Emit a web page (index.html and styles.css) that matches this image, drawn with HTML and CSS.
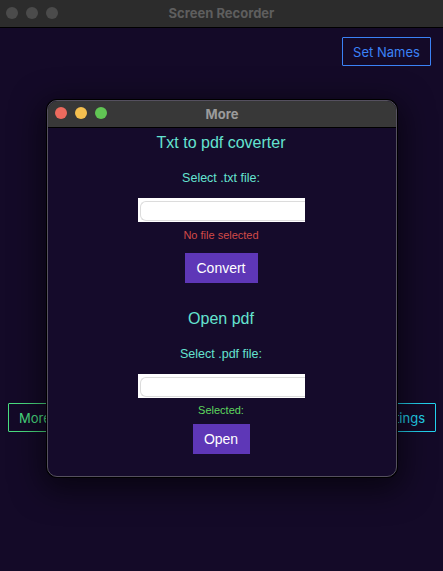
FILE: index.html
```html
<!DOCTYPE html>
<html>
<head>
<meta charset="utf-8">
<link rel="stylesheet" href="styles.css">
</head>
<body>
<div class="window">
  <div class="titlebar">
    <div class="lights">
      <span class="light grey"></span>
      <span class="light grey"></span>
      <span class="light grey"></span>
    </div>
    <div class="title">Screen Recorder</div>
  </div>
  <div class="content">
    <div class="top-row">
      <button class="btn btn-blue">Set Names</button>
    </div>
    <div class="bottom-row">
      <button class="btn btn-green">More</button>
      <button class="btn btn-cyan">Settings</button>
    </div>
  </div>

  <div class="modal">
    <div class="modal-titlebar">
      <div class="lights">
        <span class="light red"></span>
        <span class="light yellow"></span>
        <span class="light green"></span>
      </div>
      <div class="modal-title">More</div>
    </div>
    <div class="modal-body">
      <h2 class="heading">Txt to pdf coverter</h2>
      <div class="label">Select .txt file:</div>
      <div class="file-box"><div class="file-inner"></div></div>
      <div class="status status-error">No file selected</div>
      <button class="action">Convert</button>

      <h2 class="heading heading-second">Open pdf</h2>
      <div class="label">Select .pdf file:</div>
      <div class="file-box"><div class="file-inner"></div></div>
      <div class="status status-ok">Selected:</div>
      <button class="action action-open">Open</button>
    </div>
  </div>
</div>
</body>
</html>
```
FILE: styles.css
```css
* { box-sizing: border-box; }
html, body {
  margin: 0;
  padding: 0;
  width: 443px;
  height: 571px;
  overflow: hidden;
  background: #140a28;
}
.window {
  position: relative;
  width: 443px;
  height: 571px;
  background: #140a28;
  font-family: "Liberation Sans", Arial, sans-serif;
}
.titlebar {
  height: 28px;
  background: #2c2c2c;
  border-bottom: 1px solid #000;
  position: relative;
  display: flex;
  align-items: center;
  justify-content: center;
}
.lights {
  position: absolute;
  left: 6px;
  top: 7px;
  display: flex;
  gap: 8px;
}
.light {
  width: 12px;
  height: 12px;
  border-radius: 50%;
  display: block;
}
.grey { background: #4b4b4b; }
.red { background: #ec6a5e; }
.yellow { background: #f4bf4f; }
.green { background: #61c554; }
.title {
  font-family: Inter, "Liberation Sans", sans-serif;
  font-weight: 700;
  font-size: 13px;
  color: #5e5e5e;
  margin-top: -1px;
}
.content {
  display: flex;
  flex-direction: column;
}
.top-row {
  display: flex;
  justify-content: flex-end;
  padding: 9px 12px 0 0;
}
.bottom-row {
  display: flex;
  justify-content: space-between;
  padding: 0 7px 0 8px;
  margin-top: 337px;
}
.btn {
  font-family: Inter, "Liberation Sans", sans-serif;
  font-size: 13px;
  background: transparent;
  height: 29px;
  padding: 0 10px;
  border-radius: 1px;
  white-space: nowrap;
  cursor: pointer;
}
.btn-blue {
  width: 89px;
  padding: 0;
  text-align: center;
  color: #3b82f6;
  border: 1px solid #3b82f6;
}
.btn-green {
  color: #4ade80;
  border: 1px solid #4ade80;
  width: 60px;
  text-align: left;
}
.btn-cyan {
  color: #22d3ee;
  border: 1px solid #22d3ee;
  width: 78px;
  text-align: right;
}
.modal {
  position: absolute;
  left: 47px;
  top: 100px;
  width: 350px;
  height: 377px;
  background: #150b2b;
  border: 1px solid #55505f;
  border-radius: 10px;
  overflow: hidden;
  box-shadow: 0 0 0 1px #000, 0 8px 30px 6px rgba(0, 0, 0, 0.55);
}
.modal-titlebar {
  height: 27px;
  background: #383838;
  border-bottom: 1px solid #000;
  position: relative;
  display: flex;
  align-items: center;
  justify-content: center;
}
.modal-titlebar .lights {
  left: 7px;
  top: 6px;
}
.modal-title {
  font-family: Inter, "Liberation Sans", sans-serif;
  font-weight: 700;
  font-size: 13px;
  color: #9b9b9b;
}
.modal-body {
  display: flex;
  flex-direction: column;
  align-items: center;
  padding-top: 5px;
  padding-right: 2px;
}
.heading {
  margin: 0;
  font-size: 16px;
  line-height: 20px;
  font-weight: 400;
  color: #64e3d0;
}
.heading-second { margin-top: 26px; }
.label {
  margin-top: 17px;
  font-size: 12.5px;
  line-height: 16px;
  color: #64e3d0;
}
.file-box {
  margin-top: 12px;
  width: 167px;
  height: 24px;
  background: #fff;
  padding: 3px 0 1px 2px;
}
.file-inner {
  width: 100%;
  height: 100%;
  border: 1px solid #dcdcdc;
  border-right: none;
  border-radius: 6px 0 0 6px;
}
.status {
  font-size: 11px;
  line-height: 14px;
}
.status-error {
  margin-top: 6px;
  color: #d24a48;
}
.status-ok {
  margin-top: 5px;
  color: #5ed65e;
}
.action {
  margin-top: 11px;
  width: 73px;
  height: 30px;
  border: none;
  background: #5e37b7;
  color: #fff;
  font-family: "Liberation Sans", Arial, sans-serif;
  font-size: 14px;
  padding: 0;
}
.action-open {
  margin-top: 7px;
  width: 57px;
}
```
